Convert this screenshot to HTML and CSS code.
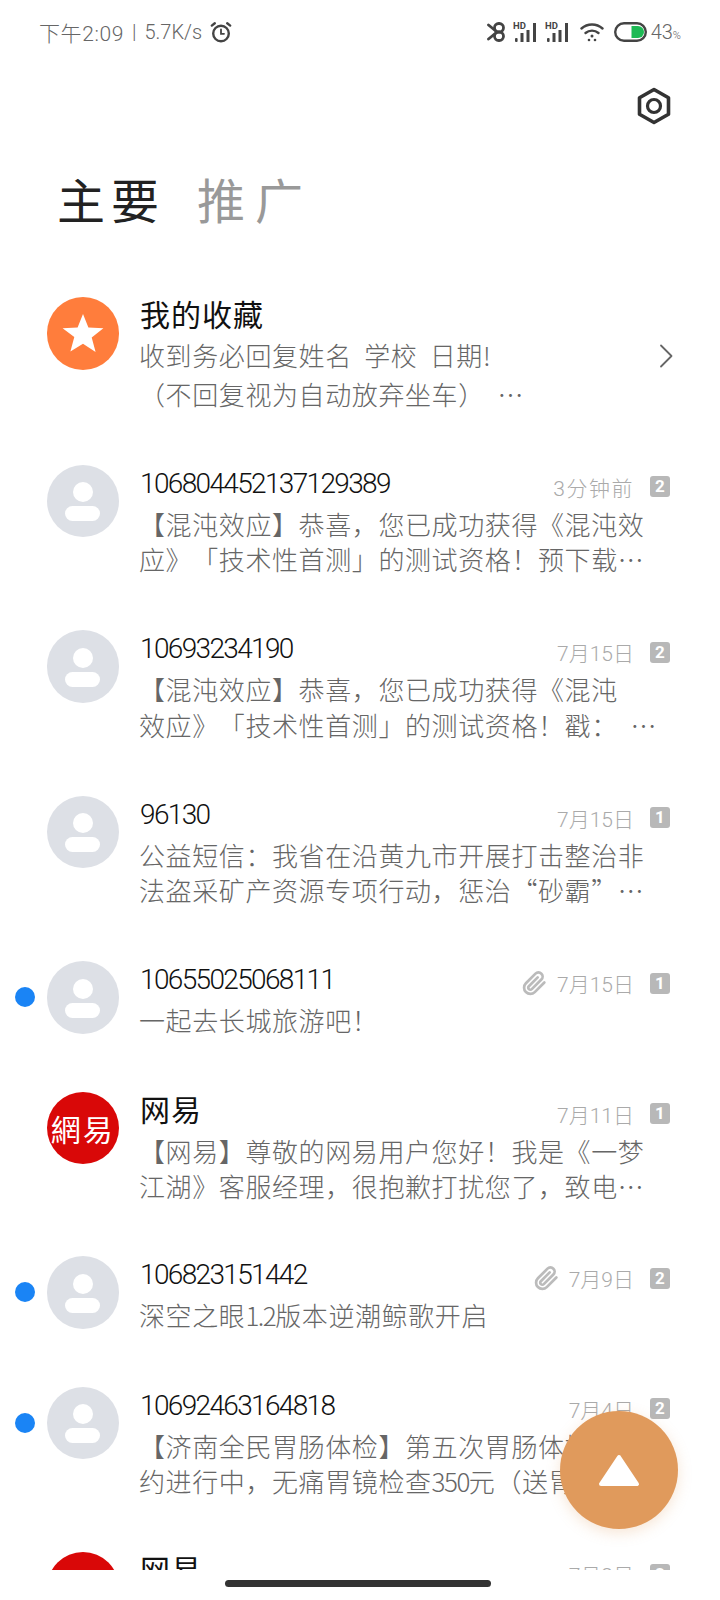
FILE: index.html
```html
<!DOCTYPE html>
<html lang="zh-CN">
<head>
    <meta charset="UTF-8">
    <meta name="viewport" content="width=device-width, initial-scale=1.0">
    <title>短信</title>
    <link rel="stylesheet" href="styles.css">
</head>
<body>
    <div class="app">
        <div class="status-bar">
            <div class="status-left">
                <span class="status-time">下午2:09</span>
                <span>|</span>
                <span>5.7K/s</span>
                <svg width="22" height="22" viewBox="0 0 22 22" fill="none" stroke="#444" stroke-width="2.4" stroke-linecap="round">
                    <circle cx="11" cy="12.5" r="7.8"/>
                    <path d="M11 8.5v4.3h3" stroke-width="1.8"/>
                    <path d="M1.8 4.6l3-2.4M20.2 4.6l-3-2.4"/>
                </svg>
            </div>
            <div class="status-right">
                <svg width="18" height="20" viewBox="0 0 18 20" fill="none" stroke="#444" stroke-width="2.8" stroke-linecap="round">
                    <rect x="7.5" y="1.5" width="9" height="8.5" rx="4.2"/>
                    <rect x="7.5" y="10" width="9" height="8.5" rx="4.2"/>
                    <path d="M1.5 3l8.5 7-8.5 7"/>
                </svg>
                <svg width="24" height="20" viewBox="0 0 24 20" fill="#444">
                    <text class="hd" x="0" y="7">HD</text>
                    <rect x="2" y="16" width="2.6" height="4" rx="1"/>
                    <rect x="7.5" y="11" width="3" height="9"/>
                    <rect x="13.5" y="8" width="3" height="12"/>
                    <rect x="20" y="1" width="3" height="19"/>
                </svg>
                <svg width="24" height="20" viewBox="0 0 24 20" fill="#444">
                    <text class="hd" x="0" y="7">HD</text>
                    <rect x="2" y="16" width="2.6" height="4" rx="1"/>
                    <rect x="7.5" y="11" width="3" height="9"/>
                    <rect x="13.5" y="8" width="3" height="12"/>
                    <rect x="20" y="1" width="3" height="19"/>
                </svg>
                <svg class="icon-wifi" width="24" height="20" viewBox="0 0 24 20" fill="none" stroke="#444" stroke-width="2.4" stroke-linecap="round">
                    <path d="M1.5 6.5c6-5.4 15-5.400 21 0"/>
                    <path d="M5.5 11c3.800-3.200 9.200-3.200 13 0"/>
                    <circle cx="9" cy="18" r="1.300" fill="#444" stroke="none"/>
                    <circle cx="15" cy="18" r="1.300" fill="#444" stroke="none"/>
                    <circle cx="12" cy="14" r="1.500" fill="#444" stroke="none"/>
                </svg>
                <svg class="icon-battery" width="33" height="20" viewBox="0 0 33 20" fill="none">
                    <rect x="1.200" y="1.200" width="30.600" height="17.600" rx="8.800" stroke="#444" stroke-width="2.400"/>
                    <path d="M17.500 4h6.500a6 6 0 0 1 0 12h-6.500z" fill="#1db954"/>
                </svg>
                <span class="battery-text">43<small>%</small></span>
            </div>
        </div>

        <div class="toolbar">
            <svg width="36" height="38" viewBox="0 0 36 38" fill="none" stroke="#333" stroke-width="3.600" stroke-linejoin="round">
                <path d="M18 2.500l14.500 8.300v16.400L18 35.500 3.500 27.200V10.800z"/>
                <circle cx="18" cy="19" r="6.500" stroke-width="3.200"/>
            </svg>
        </div>

        <div class="tabs">
            <span class="tab tab-active">主要</span>
            <span class="tab">推广</span>
        </div>

        <div class="list">
            <div class="row row-fav">
                <div class="avatar avatar-star">
                    <svg width="42" height="40" viewBox="0 0 42 40" fill="#fff">
                        <path d="M21 1l5.400 13.400 15 .8-11.700 9.300 3.900 14.500L21 30.800 8.400 38.500l3.900-14.500L.6 15.200l15-.8z"/>
                    </svg>
                </div>
                <div class="row-body">
                    <div class="row-head">
                        <span class="name">我的收藏</span>
                    </div>
                    <div class="preview">
                        <div class="line line-spaced">收到务必回复姓名 学校 日期!</div>
                        <div class="line">（不回复视为自动放弃坐车） &nbsp;…</div>
                    </div>
                </div>
                <svg class="chevron" width="14" height="24" viewBox="0 0 14 24" fill="none" stroke="#666" stroke-width="1.800" stroke-linecap="round" stroke-linejoin="round">
                    <path d="M2 1.500L12.500 12 2 22.500"/>
                </svg>
            </div>

            <div class="row">
                <div class="avatar avatar-person"></div>
                <div class="row-body">
                    <div class="row-head">
                        <span class="name name-num">106804452137129389</span>
                        <div class="meta">
                            <span class="time time-wide">3分钟前</span>
                            <span class="badge">2</span>
                        </div>
                    </div>
                    <div class="preview">
                        <div class="line">【混沌效应】恭喜，您已成功获得《混沌效</div>
                        <div class="line">应》「技术性首测」的测试资格！预下载…</div>
                    </div>
                </div>
            </div>

            <div class="row">
                <div class="avatar avatar-person"></div>
                <div class="row-body">
                    <div class="row-head">
                        <span class="name name-num">10693234190</span>
                        <div class="meta">
                            <span class="time">7月15日</span>
                            <span class="badge">2</span>
                        </div>
                    </div>
                    <div class="preview">
                        <div class="line">【混沌效应】恭喜，您已成功获得《混沌</div>
                        <div class="line">效应》「技术性首测」的测试资格！戳： &nbsp;…</div>
                    </div>
                </div>
            </div>

            <div class="row">
                <div class="avatar avatar-person"></div>
                <div class="row-body">
                    <div class="row-head">
                        <span class="name name-num">96130</span>
                        <div class="meta">
                            <span class="time">7月15日</span>
                            <span class="badge">1</span>
                        </div>
                    </div>
                    <div class="preview">
                        <div class="line">公益短信：我省在沿黄九市开展打击整治非</div>
                        <div class="line">法盗采矿产资源专项行动，惩治“砂霸”…</div>
                    </div>
                </div>
            </div>

            <div class="row row-short">
                <span class="dot"></span>
                <div class="avatar avatar-person"></div>
                <div class="row-body">
                    <div class="row-head">
                        <span class="name name-num">10655025068111</span>
                        <div class="meta">
                            <svg class="clip" width="25" height="25" viewBox="0 0 24 24" fill="none" stroke="#bbb" stroke-width="2.600" stroke-linecap="round" stroke-linejoin="round">
                                <path d="M21.440 11.050l-9.190 9.190a6 6 0 0 1-8.490-8.490l9.190-9.190a4 4 0 0 1 5.660 5.660l-9.200 9.190a2 2 0 0 1-2.830-2.830l8.490-8.480"/>
                            </svg>
                            <span class="time">7月15日</span>
                            <span class="badge">1</span>
                        </div>
                    </div>
                    <div class="preview">
                        <div class="line">一起去长城旅游吧！</div>
                    </div>
                </div>
            </div>

            <div class="row row-tight">
                <div class="avatar avatar-netease">網易</div>
                <div class="row-body">
                    <div class="row-head">
                        <span class="name">网易</span>
                        <div class="meta">
                            <span class="time">7月11日</span>
                            <span class="badge">1</span>
                        </div>
                    </div>
                    <div class="preview">
                        <div class="line">【网易】尊敬的网易用户您好！我是《一梦</div>
                        <div class="line">江湖》客服经理，很抱歉打扰您了，致电…</div>
                    </div>
                </div>
            </div>

            <div class="row row-short">
                <span class="dot"></span>
                <div class="avatar avatar-person"></div>
                <div class="row-body">
                    <div class="row-head">
                        <span class="name name-num">106823151442</span>
                        <div class="meta">
                            <svg class="clip" width="25" height="25" viewBox="0 0 24 24" fill="none" stroke="#bbb" stroke-width="2.600" stroke-linecap="round" stroke-linejoin="round">
                                <path d="M21.440 11.050l-9.190 9.190a6 6 0 0 1-8.490-8.490l9.190-9.190a4 4 0 0 1 5.660 5.660l-9.200 9.190a2 2 0 0 1-2.830-2.830l8.490-8.480"/>
                            </svg>
                            <span class="time">7月9日</span>
                            <span class="badge">2</span>
                        </div>
                    </div>
                    <div class="preview">
                        <div class="line">深空之眼<span class="num">1.2</span>版本逆潮鲸歌开启</div>
                    </div>
                </div>
            </div>

            <div class="row">
                <span class="dot"></span>
                <div class="avatar avatar-person"></div>
                <div class="row-body">
                    <div class="row-head">
                        <span class="name name-num">10692463164818</span>
                        <div class="meta">
                            <span class="time">7月4日</span>
                            <span class="badge">2</span>
                        </div>
                    </div>
                    <div class="preview">
                        <div class="line">【济南全民胃肠体检】第五次胃肠体检预</div>
                        <div class="line">约进行中，无痛胃镜检查<span class="num">350</span>元（送胃肠…</div>
                    </div>
                </div>
            </div>

            <div class="row">
                <div class="avatar avatar-netease">網易</div>
                <div class="row-body">
                    <div class="row-head">
                        <span class="name">网易</span>
                        <div class="meta">
                            <span class="time">7月2日</span>
                            <span class="badge">2</span>
                        </div>
                    </div>
                </div>
            </div>
        </div>

        <div class="home-area">
            <div class="home-bar"></div>
        </div>

        <div class="fab">
            <svg width="42" height="33" viewBox="0 0 42 33" fill="#fff" stroke="#fff" stroke-width="4" stroke-linejoin="round">
                <path d="M21 3L39 30H3z"/>
            </svg>
        </div>
    </div>
</body>
</html>
```

FILE: styles.css
```css
* {
    margin: 0;
    padding: 0;
    box-sizing: border-box;
}

body {
    background: #fff;
    font-family: Roboto, 'Noto Sans CJK SC', sans-serif;
    font-weight: 300;
    color: #333;
}

.app {
    position: relative;
    width: 720px;
    height: 1600px;
    overflow: hidden;
    background: #fff;
    display: flex;
    flex-direction: column;
}

/* status bar */
.status-bar {
    height: 64px;
    padding: 0 39px;
    display: flex;
    justify-content: space-between;
    align-items: center;
    color: #666;
    font-size: 20px;
}

.status-left {
    display: flex;
    align-items: center;
    gap: 8px;
}

.status-time {
    font-size: 21px;
    letter-spacing: 0.6px;
}

.status-right {
    display: flex;
    align-items: center;
    gap: 8px;
}

.icon-wifi {
    margin-left: 3px;
}

.icon-battery {
    margin-left: 2px;
}

.hd {
    font-family: Roboto, sans-serif;
    font-size: 9.5px;
    font-weight: 700;
}

.battery-text {
    font-size: 20px;
    margin-left: -4px;
}

.battery-text small {
    font-size: 11px;
}

/* settings icon */
.toolbar {
    height: 68px;
    padding: 23px 48px 0 0;
    display: flex;
    justify-content: flex-end;
}

/* tabs */
.tabs {
    height: 165px;
    padding: 39px 0 0 57px;
    display: flex;
    gap: 32px;
}

.tab {
    font-size: 48px;
    line-height: 64px;
    letter-spacing: 10px;
    color: #999;
    font-weight: 400;
}

.tab-active {
    color: #222;
    letter-spacing: 6px;
}

/* list */
.list {
    height: 1273px;
    overflow: hidden;
}

.row {
    position: relative;
    display: flex;
    align-items: flex-start;
    padding: 0 50px 53.5px 46.5px;
}

.row-short {
    padding-bottom: 54px;
}

.row-tight {
    padding-bottom: 52.5px;
}

.row-fav {
    padding-bottom: 51.5px;
    padding-right: 47px;
}

.row-fav .line {
    line-height: 39px;
}

.row-fav .preview {
    margin-top: 0;
}

.avatar {
    flex-shrink: 0;
    width: 72.5px;
    height: 72.5px;
    border-radius: 50%;
    display: flex;
    align-items: center;
    justify-content: center;
}

.avatar-star {
    background: #ff7d3c;
}

.avatar-netease {
    background: #d90808;
    color: #fff;
    font-family: 'Noto Sans CJK TC', sans-serif;
    font-size: 30px;
    font-weight: 400;
    letter-spacing: 2px;
}

.avatar-person {
    background: #dde0e6;
    flex-direction: column;
    gap: 4px;
    padding-top: 2px;
}

.avatar-person::before {
    content: "";
    width: 20px;
    height: 20px;
    border-radius: 50%;
    background: #fff;
}

.avatar-person::after {
    content: "";
    width: 35px;
    height: 15px;
    border-radius: 8px;
    background: #fff;
}

.dot {
    position: absolute;
    left: 15px;
    top: 26px;
    width: 20px;
    height: 20px;
    border-radius: 50%;
    background: #1a84f5;
}

.row-body {
    flex: 1;
    min-width: 0;
    margin-left: 21px;
}

.row-head {
    height: 38px;
    display: flex;
    justify-content: space-between;
    align-items: center;
}

.name {
    font-size: 30px;
    line-height: 38px;
    letter-spacing: 1px;
    color: #111;
    font-weight: 400;
}

.name-num {
    font-size: 28px;
    font-weight: 300;
    letter-spacing: -1.65px;
}

.meta {
    display: flex;
    align-items: center;
    padding-top: 6px;
}

.clip {
    margin-right: 10px;
}

.time {
    font-size: 21px;
    color: #aaa;
    margin-right: 16px;
}

.time-wide {
    letter-spacing: 1.5px;
}

.badge {
    width: 20px;
    height: 21px;
    border-radius: 3px;
    background: #b8b8b8;
    color: #fff;
    font-size: 17px;
    font-weight: 700;
    line-height: 21px;
    text-align: center;
}

.preview {
    margin-top: 3px;
    margin-left: -1px;
    color: #666;
    font-family: 'Noto Sans CJK SC', sans-serif;
    font-size: 26px;
    letter-spacing: 0.6px;
    text-spacing-trim: space-all;
}

.line {
    line-height: 35.5px;
    white-space: nowrap;
    overflow: hidden;
}

.line-spaced {
    word-spacing: 6px;
}

.num {
    letter-spacing: -1.5px;
}

.chevron {
    align-self: flex-start;
    margin-top: 47px;
    flex-shrink: 0;
}

/* bottom */
.home-area {
    flex: 1;
    display: flex;
    justify-content: center;
    padding: 10px 4px 0 0;
}

.home-bar {
    width: 266px;
    height: 7px;
    border-radius: 4px;
    background: #333;
}

.fab {
    position: absolute;
    left: 560px;
    top: 1411px;
    width: 118px;
    height: 118px;
    border-radius: 50%;
    background: #e09a5c;
    box-shadow: 0 4px 14px rgba(224, 154, 92, 0.25);
    display: flex;
    align-items: center;
    justify-content: center;
}
```
